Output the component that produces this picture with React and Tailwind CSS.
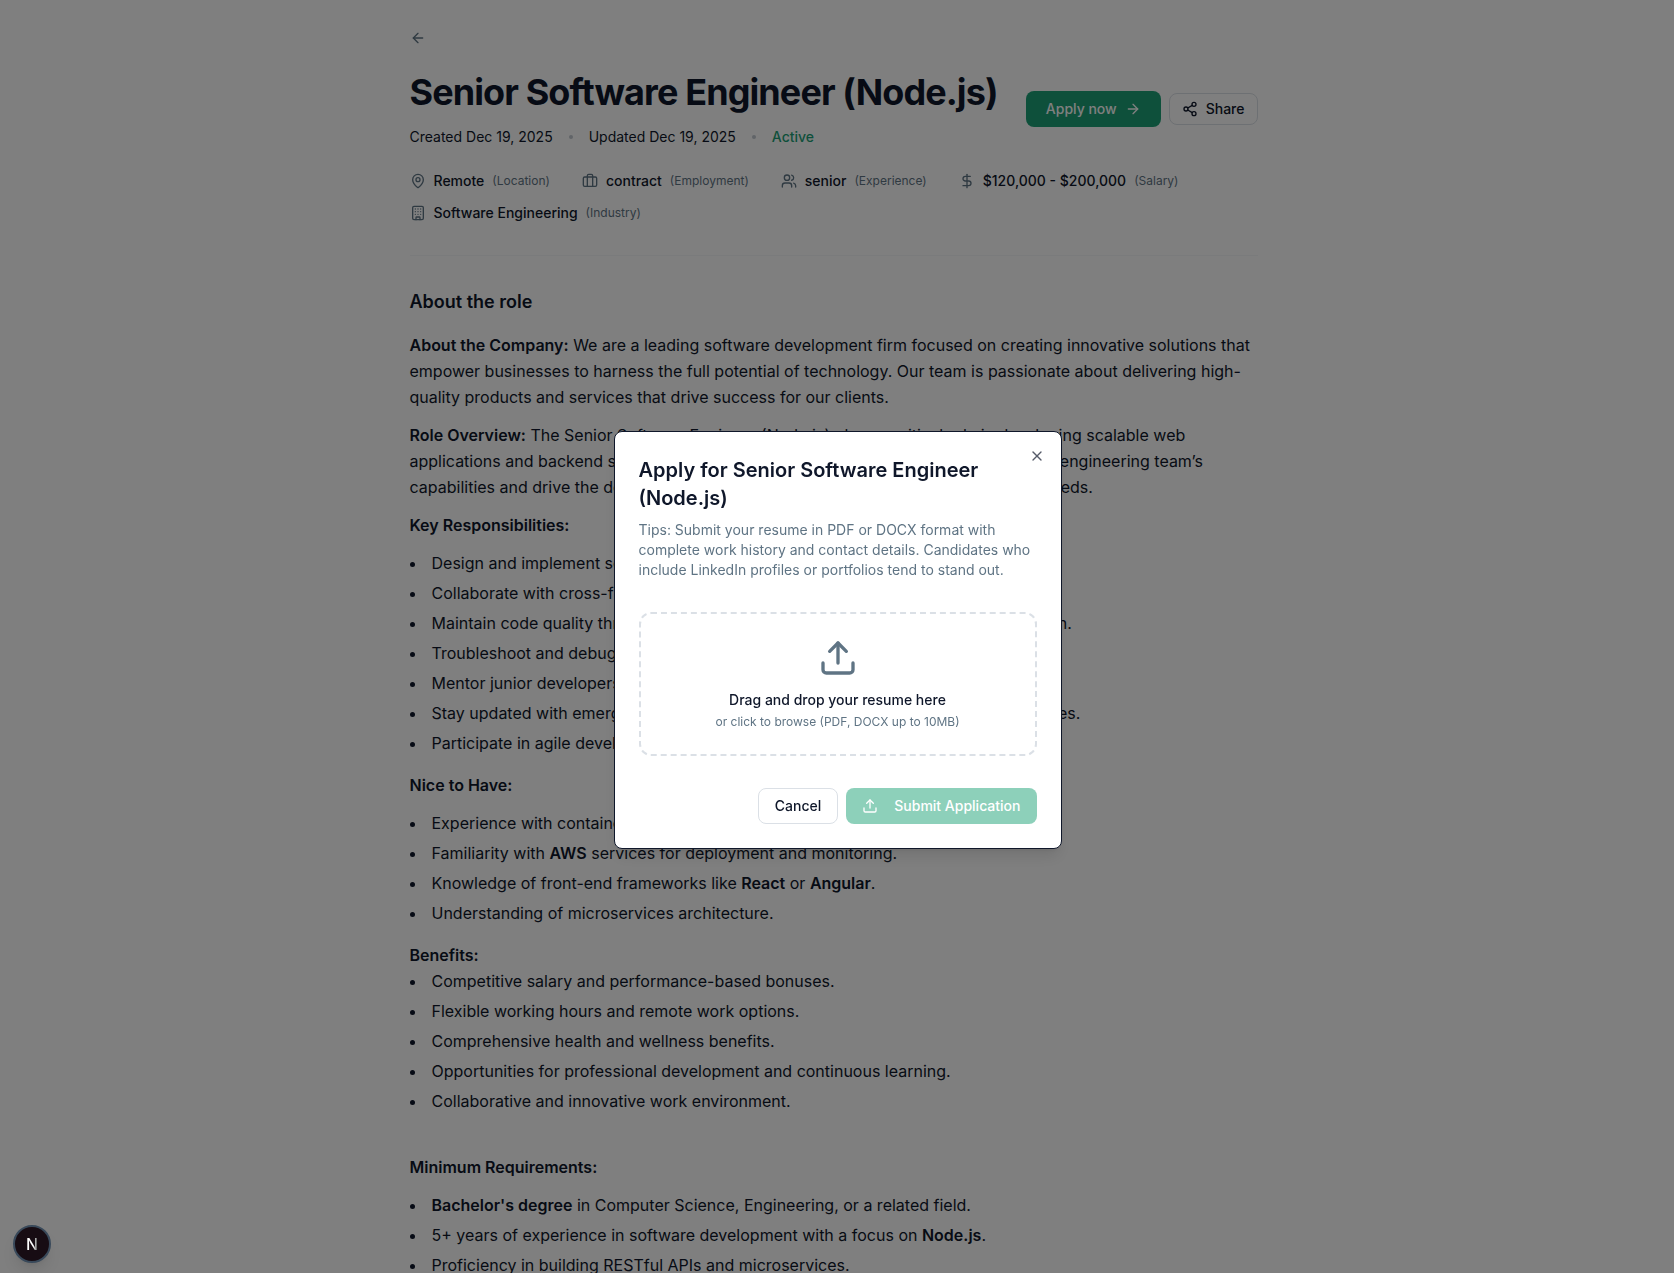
import React, { useState } from 'react';
import {
    ArrowLeft,
    ArrowRight,
    Briefcase,
    Building,
    DollarSign,
    MapPin,
    Share2,
    Upload,
    Users,
    X,
} from 'lucide-react';

const details = [
    { icon: MapPin, value: 'Remote', label: 'Location' },
    { icon: Briefcase, value: 'contract', label: 'Employment' },
    { icon: Users, value: 'senior', label: 'Experience' },
    { icon: DollarSign, value: '$120,000 - $200,000', label: 'Salary' },
    { icon: Building, value: 'Software Engineering', label: 'Industry' },
];

const BulletList = ({ children }) => (
    <ul className="list-disc list-inside space-y-1 mb-4">{children}</ul>
);

const Dot = () => <span className="w-1 h-1 rounded-full bg-[#c2c9d0]" />;

const JobHeader = ({ onApply }) => (
    <header className="border-b border-[#f5f7f8] pb-8">
        <div className="flex items-center justify-between gap-4">
            <div>
                <h1 className="text-4xl leading-[44px] font-bold tracking-tight">Senior Software Engineer (Node.js)</h1>
                <div className="flex items-center gap-4 mt-[13px] text-sm">
                    <span>Created Dec 19, 2025</span>
                    <Dot />
                    <span>Updated Dec 19, 2025</span>
                    <Dot />
                    <span className="font-medium text-[#1da177]">Active</span>
                </div>
            </div>
            <div className="flex items-center gap-2 shrink-0">
                <button
                    type="button"
                    onClick={onApply}
                    className="flex items-center gap-2 h-9 px-5 rounded-lg bg-[#1da177] text-sm font-medium text-white"
                >
                    Apply now
                    <ArrowRight className="w-4 h-4" />
                </button>
                <button
                    type="button"
                    className="flex items-center gap-2 h-8 px-3 rounded-lg border border-[#dbe0e6] text-sm font-medium"
                >
                    <Share2 className="w-4 h-4" />
                    Share
                </button>
            </div>
        </div>

        <div className="flex flex-wrap gap-x-8 gap-y-3 mt-6">
            {details.map(({ icon: Icon, value, label }) => (
                <div key={label} className="flex items-center gap-2 text-sm">
                    <Icon className="w-4 h-4 text-[#5f7484]" />
                    <span className="font-medium">{value}</span>
                    <span className="text-xs text-[#5f7484]">({label})</span>
                </div>
            ))}
        </div>
    </header>
);

const JobDescription = () => (
    <section className="pt-8">
        <h2 className="text-lg font-semibold mb-4">About the role</h2>
        <div className="text-base leading-[26px]">
            <p className="mb-3">
                <strong className="font-semibold">About the Company:</strong> We are a leading software development firm
                focused on creating innovative solutions that empower businesses to harness the full potential of
                technology. Our team is passionate about delivering high-quality products and services that drive
                success for our clients.
            </p>
            <p className="mb-3">
                <strong className="font-semibold">Role Overview:</strong> The Senior Software Engineer (Node.js) plays a
                critical role in developing scalable web applications and backend services. The ideal candidate will
                help us enhance our core engineering team’s capabilities and drive the delivery of innovative solutions
                that fully meet our clients’ needs.
            </p>
            <p className="mb-3 font-semibold">Key Responsibilities:</p>
            <BulletList>
                <li>Design and implement scalable services using Node.js.</li>
                <li>Collaborate with cross-functional teams to define features.</li>
                <li>Maintain code quality through code reviews, rigorous tests, and user documentation.</li>
                <li>Troubleshoot and debug production applications.</li>
                <li>Mentor junior developers and share best practices.</li>
                <li>Stay updated with emerging technologies, industry trends and modern best practices.</li>
                <li>Participate in agile development processes.</li>
            </BulletList>
            <p className="mb-3 font-semibold">Nice to Have:</p>
            <BulletList>
                <li>Experience with containerization tools.</li>
                <li>
                    Familiarity with <strong className="font-semibold">AWS</strong> services for deployment and
                    monitoring.
                </li>
                <li>
                    Knowledge of front-end frameworks like <strong className="font-semibold">React</strong> or{' '}
                    <strong className="font-semibold">Angular</strong>.
                </li>
                <li>Understanding of microservices architecture.</li>
            </BulletList>
            <p className="font-semibold">Benefits:</p>
            <BulletList>
                <li>Competitive salary and performance-based bonuses.</li>
                <li>Flexible working hours and remote work options.</li>
                <li>Comprehensive health and wellness benefits.</li>
                <li>Opportunities for professional development and continuous learning.</li>
                <li>Collaborative and innovative work environment.</li>
            </BulletList>
            <p className="mt-10 mb-3 font-semibold">Minimum Requirements:</p>
            <BulletList>
                <li>
                    <strong className="font-semibold">Bachelor's degree</strong> in Computer Science, Engineering, or a
                    related field.
                </li>
                <li>
                    5+ years of experience in software development with a focus on{' '}
                    <strong className="font-semibold">Node.js</strong>.
                </li>
                <li>Proficiency in building RESTful APIs and microservices.</li>
            </BulletList>
        </div>
    </section>
);

const ApplyDialog = ({ onClose }) => {
    const [file, setFile] = useState(null);

    return (
        <div className="fixed inset-0 z-50 flex items-center justify-center bg-black/50 pt-[7px] pl-px">
            <div
                role="dialog"
                aria-modal="true"
                aria-labelledby="apply-title"
                className="relative w-full max-w-md rounded-lg border border-[#0f172a] bg-white p-6 shadow-lg"
            >
                <button
                    type="button"
                    aria-label="Close"
                    onClick={onClose}
                    className="absolute top-4 right-4 opacity-70 hover:opacity-100"
                >
                    <X className="w-4 h-4" />
                </button>

                <h2 id="apply-title" className="text-xl font-semibold">
                    Apply for Senior Software Engineer (Node.js)
                </h2>
                <p className="mt-2 text-sm text-[#5f7484]">
                    Tips: Submit your resume in PDF or DOCX format with complete work history and contact details.
                    Candidates who include LinkedIn profiles or portfolios tend to stand out.
                </p>

                <label
                    htmlFor="resume"
                    className="flex flex-col items-center my-8 p-6 rounded-xl border-2 border-dashed border-[#dbe0e6] cursor-pointer"
                >
                    <Upload className="w-10 h-10 mb-3 text-[#5f7484]" />
                    <span className="text-sm font-medium">{file ? file.name : 'Drag and drop your resume here'}</span>
                    <span className="mt-1 text-xs text-[#5f7484]">or click to browse (PDF, DOCX up to 10MB)</span>
                    <input
                        id="resume"
                        type="file"
                        accept=".pdf,.docx"
                        className="sr-only"
                        onChange={(e) => setFile(e.target.files[0])}
                    />
                </label>

                <div className="flex justify-end gap-2">
                    <button
                        type="button"
                        onClick={onClose}
                        className="h-9 px-4 rounded-lg border border-[#dbe0e6] text-sm font-medium"
                    >
                        Cancel
                    </button>
                    <button
                        type="submit"
                        disabled={!file}
                        className="flex items-center gap-4 h-9 px-4 rounded-lg bg-[#1da177] text-sm font-medium text-white disabled:opacity-50"
                    >
                        <Upload className="w-4 h-4" />
                        Submit Application
                    </button>
                </div>
            </div>
        </div>
    );
};

const App = () => {
    const [open, setOpen] = useState(true);

    return (
        <div className="h-screen overflow-hidden bg-white font-[Inter,sans-serif] text-[#0f172a]">
            <div className="pr-[7px]">
                <main className="max-w-4xl mx-auto px-6 pt-[30px]">
                    <a href="#" aria-label="Back to jobs" className="flex w-fit mb-6 text-[#5f7484]">
                        <ArrowLeft className="w-4 h-4" />
                    </a>
                    <JobHeader onApply={() => setOpen(true)} />
                    <JobDescription />
                </main>
            </div>

            {open && <ApplyDialog onClose={() => setOpen(false)} />}

            <button
                type="button"
                aria-label="Open dev tools"
                className="fixed bottom-[10px] left-[13px] z-50 flex items-center justify-center w-[38px] h-[38px] rounded-full border-2 border-[#39495a] bg-[#170c13] shadow-lg"
            >
                <span className="bg-linear-to-r from-white from-60% to-[#555555] bg-clip-text text-base font-medium text-transparent">
                    N
                </span>
            </button>
        </div>
    );
};

export default App;
